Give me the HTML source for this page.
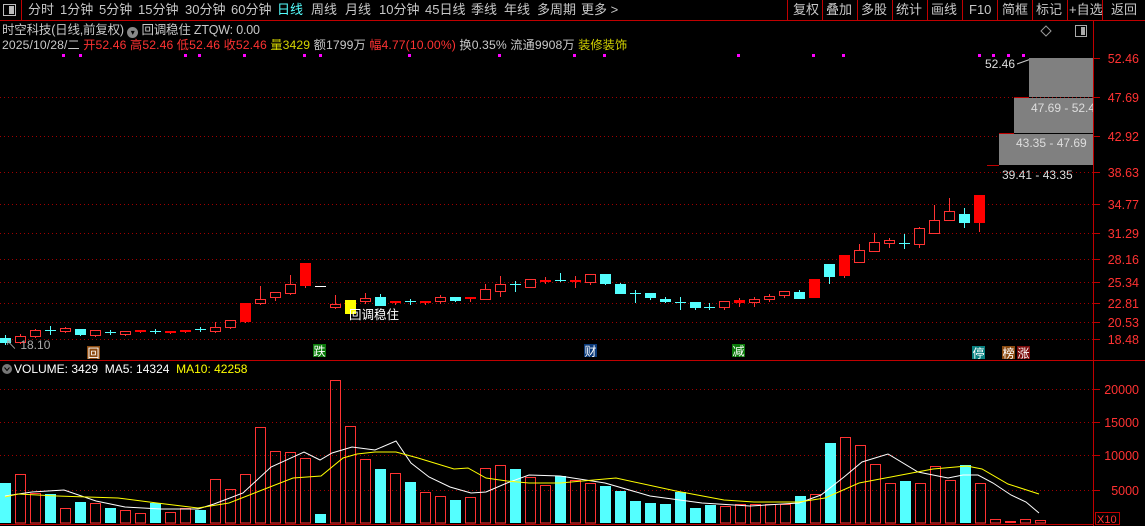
<!DOCTYPE html>
<html><head><meta charset="utf-8">
<style>
html,body{margin:0;padding:0;background:#000;overflow:hidden}
body{width:1145px;height:526px;position:relative;font-family:"Liberation Sans","Noto Sans CJK SC",sans-serif;color:#c8c8c8}
.t{position:absolute;white-space:nowrap;font-size:13px;line-height:14px}
</style></head><body>
<svg id="s" width="1145" height="526" style="position:absolute;left:0;top:0" xmlns="http://www.w3.org/2000/svg"></svg>
<div class="t" style="left:0;top:3px;width:1145px">
<span style="position:absolute;left:28px">分时</span><span style="position:absolute;left:60px">1分钟</span><span style="position:absolute;left:99px">5分钟</span><span style="position:absolute;left:138px">15分钟</span><span style="position:absolute;left:185px">30分钟</span><span style="position:absolute;left:231px">60分钟</span><span style="position:absolute;left:277px;color:#54ffff">日线</span><span style="position:absolute;left:311px">周线</span><span style="position:absolute;left:345px">月线</span><span style="position:absolute;left:379px">10分钟</span><span style="position:absolute;left:425px">45日线</span><span style="position:absolute;left:471px">季线</span><span style="position:absolute;left:504px">年线</span><span style="position:absolute;left:537px">多周期</span><span style="position:absolute;left:581px">更多 &gt;</span>
<span style="position:absolute;left:793px">复权</span><span style="position:absolute;left:826px">叠加</span><span style="position:absolute;left:861px">多股</span><span style="position:absolute;left:896px">统计</span><span style="position:absolute;left:931px">画线</span><span style="position:absolute;left:969px">F10</span><span style="position:absolute;left:1002px">简框</span><span style="position:absolute;left:1036px">标记</span><span style="position:absolute;left:1069px">+自选</span><span style="position:absolute;left:1111px">返回</span>
</div>
<div class="t" style="left:2px;top:23px;font-size:12.5px;letter-spacing:-0.2px">时空科技(日线,前复权) <span style="display:inline-block;width:11px;height:11px;border-radius:6px;background:#888;vertical-align:-1px;color:#000;font-size:8px;text-align:center;line-height:11px">▾</span> 回调稳住 ZTQW: 0.00</div>
<div class="t" style="left:2px;top:38px;font-size:12.2px;letter-spacing:0.1px">2025/10/28/二 <span style="color:#ff3232">开52.46 高52.46 低52.46 收52.46</span> <span style="color:#d4d400">量3429</span> 额1799万 <span style="color:#ff3232">幅4.77(10.00%)</span> 换0.35% 流通9908万 <span style="color:#d4d400">装修装饰</span></div>
<div class="t" style="left:349px;top:308px;color:#fff;font-size:12.5px">回调稳住</div>
<div class="t" style="left:5px;top:338px;color:#aaa;font-size:12px">↖ 18.10</div>
<div class="t" style="left:14px;top:362px;color:#fff;font-size:12px">VOLUME: 3429&nbsp; MA5: 14324&nbsp; <span style="color:#ffff00">MA10: 42258</span></div>
<div class="t" style="left:985px;top:57px;color:#ddd;font-size:12px">52.46</div>
<div style="position:absolute;left:1029px;top:58px;width:64px;height:39px;background:#808080"></div>
<div style="position:absolute;left:1014px;top:98px;width:79px;height:35px;background:#808080;overflow:hidden"><div class="t" style="left:17px;top:3px;color:#ddd;font-size:12px">47.69 - 52.46</div></div>
<div style="position:absolute;left:999px;top:134px;width:94px;height:31px;background:#808080;overflow:hidden"><div class="t" style="left:17px;top:2px;color:#ddd;font-size:12px">43.35 - 47.69</div></div>
<div class="t" style="left:1002px;top:168px;color:#ddd;font-size:12px">39.41 - 43.35</div>
<script>
var s=document.getElementById('s'),h='';
function L(x1,y1,x2,y2,c,w,d){h+='<line x1="'+x1+'" y1="'+y1+'" x2="'+x2+'" y2="'+y2+'" stroke="'+c+'" stroke-width="'+(w||1)+'"'+(d?' stroke-dasharray="'+d+'"':'')+'/>';}
function R(x,y,w,hh,f,st){h+='<rect x="'+x+'" y="'+y+'" width="'+w+'" height="'+hh+'" fill="'+(f||'none')+'"'+(st?' stroke="'+st+'"':'')+'/>';}
function T(x,y,t,c,fs,a){h+='<text x="'+x+'" y="'+y+'" fill="'+c+'" font-size="'+(fs||12)+'" font-family="Liberation Sans,Noto Sans CJK SC,sans-serif"'+(a?' text-anchor="'+a+'"':'')+'>'+t+'</text>';}
L(0,20.5,1145,20.5,'#c00000');
R(3.5,4.5,12,11,'#000','#bbb');R(9,6,5,8,'#bbb');
L(21.5,0,21.5,20,'#c00000');
[787,822,857,892,927,962,997,1032,1067,1102].forEach(function(x){L(x+.5,0,x+.5,20,'#c00000');});
h+='<path d="M1046 26 L1051 31 L1046 36 L1041 31Z" fill="none" stroke="#999"/>';
R(1075.5,25.5,11,11,'none','#aaa');R(1081,27,4,8,'#aaa');
L(1093.5,20,1093.5,526,'#c00000');
L(0,360.5,1145,360.5,'#c00000');
var pl=[[58,'52.46'],[97,'47.69'],[136,'42.92'],[172,'38.63'],[204,'34.77'],[233,'31.29'],[259,'28.16'],[282,'25.34'],[303,'22.81'],[322,'20.53'],[339,'18.48']];
pl.forEach(function(p){if(p[0]>60)L(0,p[0]+.5,1093,p[0]+.5,'#a00000',1,'1 3');L(1093,p[0]+.5,1100,p[0]+.5,'#c00000');T(1139,p[0]+5,p[1],'#ff3232',12.5,'end');});
[[389,'20000'],[422,'15000'],[455,'10000'],[490,'5000']].forEach(function(p){L(0,p[0]+.5,1093,p[0]+.5,'#a00000',1,'1 3');L(1093,p[0]+.5,1100,p[0]+.5,'#c00000');T(1139,p[0]+5,p[1],'#ff3232',12.5,'end');});
R(1095.5,512.5,24,12,'none','#c00000');T(1097,523,'X10','#ff3232',11);
[63,80,185,199,244,304,320,409,499,574,604,738,813,843,979,993,1008,1023].forEach(function(x){R(x-1,54,3,3,'#ff00ff');});
L(1017,64,1031,59,'#ccc');L(1031,58.5,1040,58.5,'#c00000');
L(1014,97.5,1029,97.5,'#c00000');L(999,133.5,1014,133.5,'#c00000');L(987,165.5,999,165.5,'#c00000');
var C=[[5,338,342,335,344,'c'],[20,336,342,334,343,'r'],[35,330,336,329,337,'r'],[50,330,330,326,334,'cx'],[65,328,331,327,332,'r'],[80,329,334,329,335,'c'],[95,330,335,330,336,'r'],[110,332,332,330,334,'cx'],[125,331,334,331,335,'r'],[140,330,331,330,332,'R'],[155,331,331,329,333,'cx'],[170,331,332,331,333,'R'],[185,330,331,330,332,'R'],[200,329,329,327,331,'cx'],[215,327,331,322,332,'r'],[230,320,327,320,328,'r'],[245,303,321,303,322,'R'],[260,299,303,286,304,'r'],[275,292,297,292,300,'r'],[290,284,293,275,294,'r'],[305,263,285,263,287,'R'],[320,286,286,286,286,'w'],[335,304,307,295,308,'r'],[350,300,313,300,313,'y'],[365,298,301,293,303,'r'],[380,297,305,294,305,'c'],[395,301,302,301,304,'R'],[410,301,301,299,304,'cx'],[425,301,302,301,304,'R'],[440,297,301,295,303,'r'],[455,297,300,297,301,'c'],[470,297,298,297,301,'R'],[485,289,299,284,299,'r'],[500,284,291,276,296,'r'],[515,284,284,281,291,'cx'],[530,279,287,279,287,'r'],[545,280,281,277,283,'R'],[560,280,280,273,281,'cx'],[575,280,281,276,287,'R'],[590,274,282,274,284,'r'],[605,274,283,274,284,'c'],[620,284,293,283,293,'c'],[635,293,293,290,302,'cx'],[650,293,297,293,299,'c'],[665,299,301,297,302,'c'],[680,302,302,297,309,'cx'],[695,302,307,302,309,'c'],[709,307,307,303,309,'cx'],[724,301,307,301,309,'r'],[739,300,302,298,306,'R'],[754,299,302,297,306,'r'],[769,296,299,294,301,'r'],[784,291,295,291,297,'r'],[799,292,298,290,298,'c'],[814,279,297,279,297,'R'],[829,264,276,264,283,'c'],[844,255,275,255,277,'R'],[859,250,262,244,262,'r'],[874,242,251,233,251,'r'],[889,240,243,238,247,'r'],[904,243,243,234,248,'cx'],[919,228,244,227,247,'r'],[934,220,233,205,233,'r'],[949,211,220,198,220,'r'],[964,214,222,208,227,'c'],[979,195,222,195,231,'R']];
C.forEach(function(c){var x=c[0],t=c[5];
 var col=t[0]=='c'?'#54ffff':(t=='y'?'#ffff00':(t=='w'?'#fff':'#ff3232'));
 L(x+.5,c[3],x+.5,c[4]+1,col);
 if(t=='cx'||t=='w'){L(x-5,c[1]+.5,x+6,c[1]+.5,col);return;}
 var hh=Math.max(c[2]-c[1],1);
 if(t=='r'){R(x-4.5,c[1]+.5,10,hh,'#000',col);}
 else if(t=='R'){R(x-5,c[1],11,hh+1,'#ff0000');}
 else R(x-5,c[1],11,hh+1,col);
});
function M(x,y,t,bg){R(x,y,13,13,bg);T(x+0.5,y+11.5,t,'#fff',12);}
M(87,346,'回','#8b4a10');M(313,344,'跌','#0a7a0a');M(584,344,'财','#0a3a7a');M(732,344,'减','#0a7a0a');M(972,346,'停','#0a8080');M(1002,346,'榜','#8b4a10');M(1017,346,'涨','#7a0a0a');
h+='<circle cx="7" cy="369" r="5" fill="#777"/><path d="M4.5 367.5 L7 370.5 L9.5 367.5" stroke="#000" fill="none"/>';
var V=[['c',483],['r',474],['r',493],['c',494],['r',508],['c',502],['r',503],['c',508],['r',510],['r',513],['c',503],['r',512],['r',508],['c',510],['r',479],['r',489],['r',474],['r',427],['r',451],['r',452],['r',458],['c',514],['r',380],['r',426],['r',459],['c',469],['r',473],['c',482],['r',492],['r',496],['c',500],['r',497],['r',468],['r',465],['c',469],['r',477],['r',485],['c',476],['r',480],['r',483],['c',486],['c',491],['c',501],['c',503],['c',504],['c',492],['c',508],['c',505],['r',506],['r',504],['r',504],['r',504],['r',504],['c',496],['r',494],['c',443],['r',437],['r',445],['r',464],['r',483],['c',481],['r',483],['r',466],['r',480],['c',465],['r',483],['r',519],['R',521],['r',519],['r',520]];
V.forEach(function(v,i){var x=15*i;
 if(v[0]=='c')R(x,v[1],11,523-v[1],'#54ffff');
 else if(v[0]=='R')R(x,v[1],11,523-v[1],'#ff3232');
 else R(x+.5,v[1]+.5,10,522.5-v[1],'none','#ff3232');});
function P(pts,c){h+='<polyline fill="none" stroke="'+c+'" stroke-width="1" points="'+pts.map(function(p){return p.join(',')}).join(' ')+'"/>';}
P([[5,496],[32,492],[64,490],[96,501],[125,507],[161,509],[198,509],[214,504],[243,493],[271,467],[304,452],[320,460],[332,453],[352,447],[375,450],[396,441],[411,463],[429,477],[450,487],[471,493],[486,492],[507,483],[529,475],[560,476],[605,483],[650,496],[702,503],[750,506],[799,503],[821,495],[844,477],[862,462],[888,454],[918,472],[948,478],[963,475],[978,475],[993,483],[1011,495],[1026,502],[1039,513]],'#fff');
P([[5,497],[18,494],[57,496],[118,498],[157,503],[198,508],[229,503],[257,492],[293,478],[321,476],[343,458],[357,454],[375,452],[396,452],[418,458],[454,469],[468,468],[486,478],[507,481],[529,483],[560,483],[616,478],[676,491],[724,500],[754,502],[799,502],[825,498],[859,483],[896,476],[933,469],[967,466],[982,469],[1008,484],[1039,494]],'#ffff00');
L(0,524.5,1093,524.5,'#c00000');
s.innerHTML=h;
</script>
</body></html>
